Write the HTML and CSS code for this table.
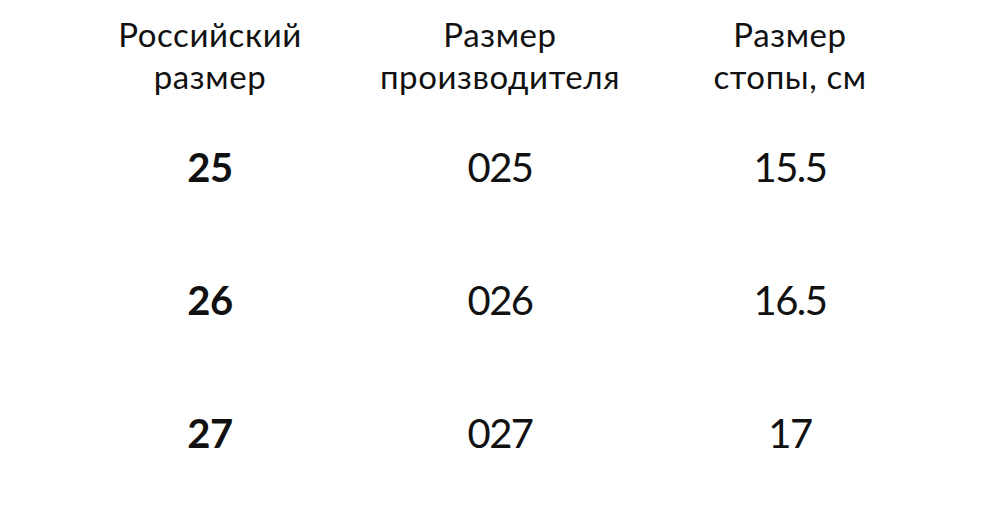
FILE: index.html
```html
<!DOCTYPE html>
<html lang="ru">
<head>
<meta charset="utf-8">
<link rel="stylesheet" href="styles.css">
</head>
<body>
<div class="table">
  <div class="head">Российский<br>размер</div>
  <div class="head">Размер<br>производителя</div>
  <div class="head">Размер<br>стопы, см</div>

  <div class="cell bold">25</div>
  <div class="cell">025</div>
  <div class="cell">15.5</div>

  <div class="cell bold">26</div>
  <div class="cell">026</div>
  <div class="cell">16.5</div>

  <div class="cell bold">27</div>
  <div class="cell">027</div>
  <div class="cell">17</div>
</div>
</body>
</html>
```
FILE: styles.css
```css
html, body {
  margin: 0;
  padding: 0;
  background: #fff;
}
body {
  width: 1000px;
  height: 523px;
  overflow: hidden;
  font-family: "Lato", "Liberation Sans", sans-serif;
  color: #111;
}
.table {
  display: grid;
  grid-template-columns: 290px 290px 290px;
  padding: 13px 0 0 65px;
}
.head {
  text-align: center;
  font-size: 33px;
  letter-spacing: 0.6px;
  line-height: 42px;
  margin-bottom: 4px;
}
.cell {
  text-align: center;
  font-size: 40px;
  letter-spacing: -1.5px;
  line-height: 133px;
}
.bold {
  font-weight: 700;
  letter-spacing: -0.5px;
}
```
